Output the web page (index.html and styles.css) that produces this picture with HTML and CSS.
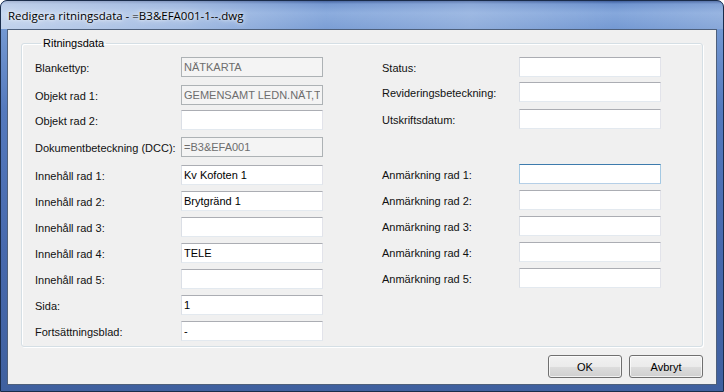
FILE: index.html
```html
<!DOCTYPE html>
<html lang="sv">
<head>
    <meta charset="UTF-8">
    <title>Redigera ritningsdata</title>
    <link rel="stylesheet" href="styles.css">
</head>
<body>
    <div class="window">
        <div class="titlebar">Redigera ritningsdata - =B3&amp;EFA001-1--.dwg</div>

        <div class="client">
            <fieldset class="group">
                <legend>Ritningsdata</legend>

                <div class="columns">
                    <div class="col col-left">
                        <div class="row"><label>Blankettyp:</label><input class="field" value="NÄTKARTA" disabled></div>
                        <div class="row mt8"><label>Objekt rad 1:</label><input class="field" value="GEMENSAMT LEDN.NÄT,TELE" disabled></div>
                        <div class="row mt5"><label>Objekt rad 2:</label><input class="field" value=""></div>
                        <div class="row mt7"><label>Dokumentbeteckning (DCC):</label><input class="field" value="=B3&amp;EFA001" disabled></div>
                        <div class="row mt8"><label>Innehåll rad 1:</label><input class="field" value="Kv Kofoten 1"></div>
                        <div class="row"><label>Innehåll rad 2:</label><input class="field" value="Brytgränd 1"></div>
                        <div class="row"><label>Innehåll rad 3:</label><input class="field" value=""></div>
                        <div class="row"><label>Innehåll rad 4:</label><input class="field" value="TELE"></div>
                        <div class="row"><label>Innehåll rad 5:</label><input class="field" value=""></div>
                        <div class="row"><label>Sida:</label><input class="field" value="1"></div>
                        <div class="row"><label>Fortsättningsblad:</label><input class="field" value="-"></div>
                    </div>

                    <div class="col col-right">
                        <div class="row"><label>Status:</label><input class="field" value=""></div>
                        <div class="row mt5"><label>Revideringsbeteckning:</label><input class="field" value=""></div>
                        <div class="row mt7"><label>Utskriftsdatum:</label><input class="field" value=""></div>
                        <div class="row mt35"><label>Anmärkning rad 1:</label><input class="field focused" value=""></div>
                        <div class="row"><label>Anmärkning rad 2:</label><input class="field" value=""></div>
                        <div class="row"><label>Anmärkning rad 3:</label><input class="field" value=""></div>
                        <div class="row"><label>Anmärkning rad 4:</label><input class="field" value=""></div>
                        <div class="row"><label>Anmärkning rad 5:</label><input class="field" value=""></div>
                    </div>
                </div>
            </fieldset>

            <div class="buttons">
                <button class="btn">OK</button>
                <button class="btn">Avbryt</button>
            </div>
        </div>
    </div>
</body>
</html>
```

FILE: styles.css
```css
* {
    margin: 0;
    padding: 0;
    box-sizing: border-box;
}

body {
    width: 724px;
    height: 392px;
    overflow: hidden;
    background: #ffffff;
    font-family: 'Liberation Sans', Arial, sans-serif;
    font-size: 11px;
    color: #000;
}

/* window frame (Aero look) */
.window {
    width: 724px;
    height: 392px;
    display: flex;
    flex-direction: column;
    padding: 0 6px 6px 6px;
    border: 1px solid #1a2c4a;
    border-radius: 7px 7px 0 0;
    background-color: #4a6eb0;
    background-image: linear-gradient(to bottom, #3f5f9e 0px, #6e93cf 3px, #86a8dc 12px, #7398d2 29px, #5479bd 110px, #4769ad 250px, #3f609f 100%);
}

.titlebar {
    height: 28px;
    margin: 0 -6px;
    padding-left: 7px;
    display: flex;
    align-items: center;
    font-family: 'Open Sans', 'Noto Sans', sans-serif;
    font-size: 11.5px;
    color: #000;
    text-shadow: 0 0 6px rgba(255, 255, 255, 0.9), 0 0 3px rgba(255, 255, 255, 0.8);
    background-image: linear-gradient(to right, rgba(255, 255, 255, 0.55) 0%, rgba(255, 255, 255, 0.35) 25%, rgba(255, 255, 255, 0.05) 45%, rgba(255, 255, 255, 0.2) 65%, rgba(255, 255, 255, 0) 85%, rgba(255, 255, 255, 0.15) 100%);
    border-radius: 6px 6px 0 0;
}

.client {
    flex: 1;
    background: #f0f0f0;
    border: 1px solid #4e607c;
    padding: 7px 13px 0 13px;
}

/* group box */
.group {
    height: 310px;
    border: 1px solid #d5dfe5;
    border-radius: 3px;
    box-shadow: inset 1px 1px 0 #fff, 1px 1px 0 #fff;
    padding: 7px 0 0 13px;
}

.group legend {
    margin-left: 6px;
    padding: 0 2px;
    line-height: 13px;
}

.columns {
    display: flex;
    gap: 59px;
}

.col {
    display: flex;
    flex-direction: column;
}

.row {
    display: flex;
    align-items: center;
    height: 20px;
    margin-top: 6px;
}

.row:first-child {
    margin-top: 0;
}

.row.mt5 { margin-top: 5px; }
.row.mt7 { margin-top: 7px; }
.row.mt8 { margin-top: 8px; }
.row.mt35 { margin-top: 35px; }

.row label {
    padding-top: 2px;
    white-space: nowrap;
    color: #111;
}

.col-left label {
    width: 146px;
}

.col-right label {
    width: 137px;
}

.field {
    width: 142px;
    height: 20px;
    padding: 0 2px;
    font-family: 'Liberation Sans', Arial, sans-serif;
    font-size: 11px;
    color: #000;
    background: #fff;
    border: 1px solid;
    border-color: #abadb3 #e2e3ea #e3e9ef #dbdfe6;
    outline: none;
}

.field:disabled {
    background: #f4f4f4;
    color: #6d6d6d;
    border-color: #adb2b5;
}

.field.focused {
    border-color: #3d7bad #a4c9e3 #b5cfe7 #a4c9e3;
}

/* dialog buttons */
.buttons {
    display: flex;
    justify-content: flex-end;
    gap: 7px;
    margin-top: 8px;
}

.btn {
    width: 74px;
    height: 23px;
    font-family: 'Liberation Sans', Arial, sans-serif;
    font-size: 11px;
    color: #000;
    border: 1px solid #707070;
    border-radius: 3px;
    background: linear-gradient(to bottom, #f2f2f2 0%, #ebebeb 50%, #dddddd 51%, #cfcfcf 100%);
    box-shadow: inset 0 0 0 1px rgba(255, 255, 255, 0.7);
}
```
